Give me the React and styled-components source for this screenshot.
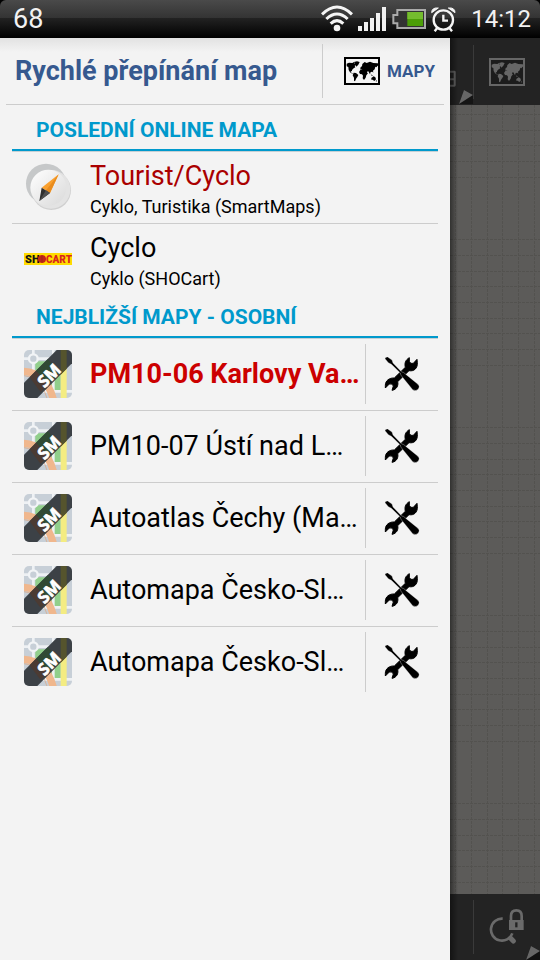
import styled, { createGlobalStyle } from "styled-components";

const GlobalStyle = createGlobalStyle`
  * {
    box-sizing: border-box;
  }

  body {
    margin: 0;
    background: #000;
    font-family: Roboto, "Noto Sans", sans-serif;
  }

  button {
    margin: 0;
    padding: 0;
    border: 0;
    background: none;
    font: inherit;
    color: inherit;
    cursor: pointer;
  }

  svg {
    display: block;
    flex: none;
  }
`;

const Screen = styled.div`
  display: flex;
  flex-direction: column;
  min-height: 100vh;
`;

const StatusBar = styled.header`
  display: flex;
  align-items: center;
  height: 38px;
  padding: 0 9px 0 13px;
  border-radius: 6px 6px 0 0;
  background: linear-gradient(#4a4a4a, #343434 46%, #222 48%, #000);
  color: #f2f2f2;
`;

const Battery = styled.span`
  flex: 1;
  font-size: 27px;
  line-height: 38px;
`;

const StatusIcons = styled.div`
  display: flex;
  align-items: center;
  gap: 5px;
`;

const Clock = styled.time`
  margin-left: 15px;
  font-size: 24px;
  line-height: 38px;
`;

const Body = styled.div`
  display: flex;
  flex: 1;
`;

const Drawer = styled.aside`
  flex: 1;
  min-width: 0;
  background: linear-gradient(#e2e2e2, #f3f3f3 14px);
`;

const DrawerHeader = styled.div`
  display: flex;
  align-items: center;
  height: 67px;
  margin: 0 6px;
  border-bottom: 1px solid #ccc;
`;

const Title = styled.h1`
  flex: 1;
  margin: 0;
  padding-left: 9px;
  color: #36598f;
  font-size: 27px;
  font-weight: 700;
  line-height: 32px;
  white-space: nowrap;
`;

const MapsButton = styled.button`
  display: flex;
  align-items: center;
  gap: 7px;
  height: 54px;

  && {
    padding: 0 9px 0 21px;
    border-left: 1px solid #ccc;
    color: #36598f;
    font-size: 17px;
    font-weight: 700;
  }
`;

const Lists = styled.main`
  padding: 4px 12px 0;
`;

const SectionTitle = styled.h2`
  height: 43px;
  margin: 0;
  padding: 5px 24px 0;
  border-bottom: 1px solid #c6d0d4;
  box-shadow: inset 0 -2px 0 #0099cc;
  color: #0099cc;
  font-size: 21px;
  font-weight: 700;
  line-height: 32px;
  white-space: nowrap;
`;

const List = styled.ul`
  margin: 0;
  padding: 0;
  list-style: none;
`;

const Row = styled.li`
  display: flex;
  height: 72px;
  border-bottom: 1px solid #ccc;

  &:last-child {
    border-bottom-color: transparent;
  }
`;

const MapItem = styled.button`
  display: flex;
  flex: 1;
  align-items: center;
  gap: 18px;
  min-width: 0;
  height: 70px;

  && {
    padding-left: 12px;
    text-align: left;
  }
`;

const Labels = styled.span`
  display: flex;
  flex-direction: column;
  flex: 1;
  min-width: 0;
  padding-top: ${({ $twoLines }) => ($twoLines ? 6 : 0)}px;
`;

const Name = styled.span`
  overflow: hidden;
  color: ${({ $color }) => $color || "#000"};
  font-size: 27px;
  font-weight: ${({ $bold }) => ($bold ? 700 : 400)};
  line-height: 34px;
  white-space: nowrap;
`;

const Detail = styled.span`
  color: #000;
  font-size: 18px;
  line-height: 28px;
`;

const ToolsButton = styled.button`
  display: flex;
  align-items: center;
  justify-content: center;
  width: 73px;
  height: 60px;

  && {
    margin-top: 5px;
    border-left: 1px solid #ccc;
  }
`;

const MapStrip = styled.section`
  display: flex;
  flex-direction: column;
  position: relative;
  width: 90px;

  &::before {
    content: "";
    position: absolute;
    inset: 0 auto 0 0;
    width: 8px;
    background: linear-gradient(90deg, rgba(0, 0, 0, 0.45), transparent);
    pointer-events: none;
  }
`;

const Toolbar = styled.div`
  display: flex;
  align-items: center;
  height: ${({ $height }) => $height}px;
  background: #232323;
  color: #6a6a6a;
`;

const Peek = styled.div`
  display: flex;
  flex-direction: column;
  justify-content: flex-end;
  width: 23px;
  height: 100%;
`;

const StripButton = styled.button`
  display: flex;
  align-items: center;
  justify-content: center;
  flex: 1;
  height: 54px;

  && {
    border-left: 1px solid #3a3a3a;
  }
`;

const Canvas = styled.div`
  flex: 1;
  background-color: #5c5b59;
  background-image: repeating-linear-gradient(
      90deg,
      transparent 0 3px,
      #5c5b59 3px 4px
    ),
    repeating-linear-gradient(transparent 0 3px, #5c5b59 3px 4px),
    linear-gradient(
      90deg,
      transparent 5px,
      #53524f 5px 6px,
      transparent 6px 21px,
      #53524f 21px 22px,
      transparent 22px 37px,
      #53524f 37px 38px,
      transparent 38px
    ),
    linear-gradient(
      transparent 9px,
      #53524f 9px 10px,
      transparent 10px 25px,
      #53524f 25px 26px,
      transparent 26px 40px,
      #53524f 40px 41px,
      transparent 41px
    );
  background-size: auto, auto, 47px 47px, 47px 47px;
`;

const Corner = styled.svg`
  position: absolute;
  right: 0;
  bottom: 0;
`;

const WifiIcon = () => (
  <svg width="32" height="28" viewBox="0 0 96 84" fill="none" stroke="#f5f5f5" strokeWidth="9">
    <path d="M3 28Q48-16 93 28" />
    <path d="M16 42Q48 12 80 42" />
    <path d="M29 56Q48 38 67 56" />
    <circle cx="48" cy="69" r="10" fill="#f5f5f5" stroke="none" />
  </svg>
);

const SignalIcon = () => (
  <svg width="29" height="24" viewBox="0 0 29 24" fill="#f0f0f0">
    <path d="M0 19h4v5H0zM6 15h4v9H6zM12 11h4v13h-4zM18 6h4v18h-4zM24 0h4v24h-4z" />
  </svg>
);

const BatteryIcon = () => (
  <svg width="34" height="20" viewBox="0 0 102 60">
    <path d="M16 3h83v54H16V43H4V18h12z" fill="#333" stroke="#aaa" strokeWidth="6" />
    <path d="M46 9h47v42H46z" fill="#4c9e08" />
    <path d="M46 9h47v21H46z" fill="#74bc2e" />
  </svg>
);

const AlarmIcon = () => (
  <svg width="25" height="25" viewBox="0 0 75 75" fill="none" stroke="#f5f5f5" strokeWidth="7">
    <circle cx="37" cy="39" r="29" />
    <path d="M37 23v18h14" />
    <path d="M18 64l-7 9M56 64l7 9" />
    <path d="M2 17Q2 1 22 3zM72 17Q72 1 52 3z" fill="#f5f5f5" strokeWidth="3" />
  </svg>
);

const WorldIcon = ({ color = "#000", fill = "#f5f5f5" }) => (
  <svg width="36" height="28" viewBox="0 0 108 84">
    <path d="M3 3h102v78H3z" fill={fill} stroke={color} strokeWidth="6" />
    <g fill={color}>
      <path d="M8 20l7-3 10 1 5-3 2 5 5-1-1 6-4 1 2 5-5 3-5 5v4l-4-1 2 5 5 3-1 1-8-5-4-7-1-9-5-2z" />
      <path d="M30 15l9-2 8 2-4 8-6 6-3-7z" />
      <path d="M29 47l7 1 7 6-3 6-3 4-4 9-3-2v-9l-4-7z" />
      <path d="M49 39l8-2 8 3 4 8 3 1-5 6-2 7-5 7-4-5 1-8-3-4-6-1-3-6z" />
      <path d="M49 35l1-5 4-2 1-7 7-6 6 3 10-4 10 4 13 1 6 4-6 3-4 5-3-2-2 8-5 4 1 6-3-3-5 1-2 7-5-9-4 1 1 4-5 3-4-7-4-1-2-5-5-1-2 3z" />
      <path d="M80 52l4 2 3 3-4-1zM82 63l7-5 5 3 2 6-5 5-5-4h-4zM95 72l3-3v5z" />
    </g>
  </svg>
);

const CompassIcon = () => (
  <svg width="48" height="48" viewBox="0 0 144 144">
    <defs>
      <linearGradient id="dial" x1="0" y1="0" x2="1" y2="1">
        <stop offset="0" stopColor="#fff" />
        <stop offset="1" stopColor="#d9d9d9" />
      </linearGradient>
    </defs>
    <circle cx="66" cy="62" r="60" fill="#c6c8c9" />
    <circle cx="82" cy="82" r="59" fill="#d0d0d0" />
    <circle cx="81" cy="79" r="58" fill="#e3e3e3" />
    <circle cx="73" cy="74" r="54" fill="url(#dial)" />
    <path d="M104 34L53 74l25 16z" fill="#f9a02f" />
    <path d="M104 34L66 82l12 8z" fill="#e98c1e" />
    <path d="M53 74l25 16-32 24z" fill="#303030" />
    <path d="M66 82l12 8-32 24z" fill="#505050" />
  </svg>
);

const ShocartIcon = () => (
  <svg width="48" height="12" viewBox="0 0 48 12" fontFamily="Roboto, sans-serif" fontSize="11" fontWeight="900">
    <path d="M0 0h48v12H0z" fill="#ffdc00" />
    <text x="1" y="10" fill="#111">SH</text>
    <circle cx="18" cy="6" r="4" fill="#d8261c" />
    <path d="M14 6h8M18 2v8M15 4h6M15 8h6" stroke="#8c2a10" strokeWidth=".6" fill="none" />
    <text x="22" y="10" fontSize="10" fill="#d8261c">CART</text>
  </svg>
);

const SmartMapIcon = () => (
  <svg width="48" height="48" viewBox="0 0 144 144">
    <defs>
      <clipPath id="tile">
        <rect width="144" height="144" rx="15" />
      </clipPath>
    </defs>
    <g clipPath="url(#tile)">
      <path d="M0 0h144v144H0z" fill="#c7cfd7" />
      <path d="M34 34h76v90H34z" fill="#91cf8b" />
      <path d="M0 26h144M28 0v60M0 124h144M88 0v144" stroke="#eef1f4" strokeWidth="8" fill="none" />
      <circle cx="28" cy="26" r="13" fill="#c7cfd7" stroke="#f2f4f6" strokeWidth="7" />
      <path d="M-4 64Q66 66 88 148" stroke="#f0b78d" strokeWidth="22" fill="none" />
      <path d="M-4 76Q54 80 70 148M22 144l28-44" stroke="#dca47d" strokeWidth="2" fill="none" />
      <path d="M110 0h18v144h-18z" fill="#f4ec82" />
      <path d="M0 98L98 0h46v40L40 144H0z" fill="#3c4146" />
      <path d="M36 62l35-34 37 38-36 36z" fill="#304a34" />
      <path d="M17 82l19-20 36 40-22 24z" fill="#4b3b33" />
      <path d="M110 0h18v56l-18 18z" fill="#55542d" />
      <text
        x="75"
        y="94"
        transform="rotate(-45 75 76)"
        fill="#fff"
        stroke="#fff"
        strokeWidth="2"
        fontFamily="Open Sans, sans-serif"
        fontSize="50"
        fontWeight="700"
        textAnchor="middle"
      >
        SM
      </text>
    </g>
  </svg>
);

const ToolsIcon = () => (
  <svg width="36" height="36" viewBox="0 0 108 108">
    <path d="M76 5C64 12 61 22 64 34L31 66C16 65 4 74 4 88v8l12-12q9-3 12 6l-4 13c14-2 20-15 17-26l34-33c15 3 26-7 25-24l-1-10-11 12q-9 3-12-6z" stroke="#000" strokeWidth="3" />
    <path
      d="M3 8q1-6 8-5l13 9 3 9 26 27q6 0 10 5l38 31q8 7 2 15-7 8-17 2L55 63q-6-6-6-12L22 25l-9-5z"
      stroke="#f3f3f3"
      strokeWidth="1"
    />
  </svg>
);

const PeekIcon = () => (
  <svg width="23" height="36" viewBox="0 0 69 108">
    <path d="M0 5h13q4 0 4 4v40q0 4-4 4H0v-6h11V34H0v-6h11V11H0z" fill="#626262" />
    <path d="M27 105l15-42 27 15v27z" fill="#151515" />
    <path d="M27 105l15-42 27 15z" fill="#666" />
  </svg>
);

const LockSearchIcon = () => (
  <svg width="36" height="38" viewBox="0 0 108 114" fill="none" stroke="currentColor">
    <path d="M41 32A33 33 0 1 0 70 76" strokeWidth="8" />
    <path d="M65 91l8 8" strokeWidth="15" strokeLinecap="round" />
    <path d="M66 42V24q0-17 16-17t16 17v18" strokeWidth="8" />
    <path d="M60 36h44v30H60z" fill="currentColor" stroke="none" />
    <path d="M82 43v15" stroke="#232323" strokeWidth="7" />
  </svg>
);

const onlineMaps = [
  { name: "Tourist/Cyclo", detail: "Cyklo, Turistika (SmartMaps)", color: "#aa0000", icon: <CompassIcon /> },
  { name: "Cyclo", detail: "Cyklo (SHOCart)", icon: <ShocartIcon /> },
];

const personalMaps = [
  { id: 1, name: "PM10-06 Karlovy Va…", active: true },
  { id: 2, name: "PM10-07 Ústí nad L…" },
  { id: 3, name: "Autoatlas Čechy (Ma…" },
  { id: 4, name: "Automapa Česko-Sl…" },
  { id: 5, name: "Automapa Česko-Sl…" },
];

export default function App() {
  return (
    <Screen>
      <GlobalStyle />
      <StatusBar>
        <Battery>68</Battery>
        <StatusIcons>
          <WifiIcon />
          <SignalIcon />
          <BatteryIcon />
          <AlarmIcon />
        </StatusIcons>
        <Clock>14:12</Clock>
      </StatusBar>
      <Body>
        <Drawer>
          <DrawerHeader>
            <Title>Rychlé přepínání map</Title>
            <MapsButton>
              <WorldIcon />
              MAPY
            </MapsButton>
          </DrawerHeader>
          <Lists>
            <SectionTitle>POSLEDNÍ ONLINE MAPA</SectionTitle>
            <List>
              {onlineMaps.map(({ name, detail, color, icon }) => (
                <Row key={name}>
                  <MapItem>
                    {icon}
                    <Labels $twoLines>
                      <Name $color={color}>{name}</Name>
                      <Detail>{detail}</Detail>
                    </Labels>
                  </MapItem>
                </Row>
              ))}
            </List>
            <SectionTitle>NEJBLIŽŠÍ MAPY - OSOBNÍ</SectionTitle>
            <List>
              {personalMaps.map(({ id, name, active }) => (
                <Row key={id}>
                  <MapItem>
                    <SmartMapIcon />
                    <Labels>
                      <Name $bold={active} $color={active && "#cc0000"}>
                        {name}
                      </Name>
                    </Labels>
                  </MapItem>
                  <ToolsButton aria-label="Nástroje">
                    <ToolsIcon />
                  </ToolsButton>
                </Row>
              ))}
            </List>
          </Lists>
        </Drawer>
        <MapStrip>
          <Toolbar $height={67}>
            <Peek>
              <PeekIcon />
            </Peek>
            <StripButton aria-label="Mapy">
              <WorldIcon color="#666" fill="#1c1c1c" />
            </StripButton>
          </Toolbar>
          <Canvas />
          <Toolbar $height={66}>
            <Peek />
            <StripButton aria-label="Zámek přiblížení">
              <LockSearchIcon />
            </StripButton>
          </Toolbar>
          <Corner width="14" height="14" viewBox="0 0 14 14">
            <path d="M0 14L5 0l9 5v9z" fill="#111" />
            <path d="M0 14L5 0l9 5z" fill="#666" />
          </Corner>
        </MapStrip>
      </Body>
    </Screen>
  );
}
